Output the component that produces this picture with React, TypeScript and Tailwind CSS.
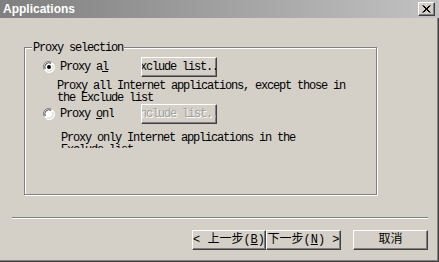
import React from "react";

const mono = { fontFamily: '"Liberation Mono", "DejaVu Sans Mono", monospace' };
const cjk = { fontFamily: '"Liberation Mono", "Noto Sans CJK SC", monospace' };

function Radio({ checked }: { checked?: boolean }) {
  return (
    <svg width="12" height="12" viewBox="0 0 12 12" className="shrink-0">
      <circle cx="6" cy="6" r="5.5" fill="#ffffff" />
      <path d="M1.2 8.5 A5.3 5.3 0 0 1 8.5 1.2" stroke="#808080" strokeWidth="1" fill="none" />
      <path d="M2.3 8 A4.2 4.2 0 0 1 8 2.3" stroke="#404040" strokeWidth="1" fill="none" />
      <path d="M10.8 3.5 A5.3 5.3 0 0 1 3.5 10.8" stroke="#ffffff" strokeWidth="1" fill="none" />
      <path d="M9.7 4 A4.2 4.2 0 0 1 4 9.7" stroke="#d4d0c8" strokeWidth="1" fill="none" />
      {checked && <circle cx="6" cy="6" r="2" fill="#000000" />}
    </svg>
  );
}

function Btn({
  children,
  w,
  disabled,
  className = "",
}: {
  children: React.ReactNode;
  w: string;
  disabled?: boolean;
  className?: string;
}) {
  return (
    <div
      className={`${w} h-[20px] shrink-0 bg-[#d4d0c8] border border-t-white border-l-white border-b-[#404040] border-r-[#404040] shadow-[inset_-1px_-1px_0_#808080] flex items-center justify-center overflow-hidden whitespace-nowrap text-[12px] leading-[12px] ${
        disabled ? "text-[#a0a0a0] [text-shadow:1px_1px_0_#ffffff]" : "text-black"
      } ${className}`}
    >
      {children}
    </div>
  );
}

export default function App() {
  return (
    <div className="w-[439px] h-[262px] bg-[#d4d0c8] flex flex-col overflow-hidden shadow-[inset_-1px_-1px_0_#404040,inset_-2px_-2px_0_#808080]">
      {/* Title bar */}
      <div className="h-[18px] shrink-0 flex items-center justify-between bg-[linear-gradient(90deg,#7f7f7f_0%,#9a9a9a_40%,#c2c2c2_100%)] pl-[3px] pr-[4px]">
        <span
          className="text-white font-bold text-[12px] leading-[14px]"
          style={{ fontFamily: '"Liberation Sans", Arial, sans-serif' }}
        >
          Applications
        </span>
        <div className="w-[17px] h-[14px] bg-[#d4d0c8] border border-t-white border-l-white border-b-[#404040] border-r-[#404040] shadow-[inset_-1px_-1px_0_#808080] flex items-center justify-center">
          <svg width="9" height="8" viewBox="0 0 9 8">
            <path d="M0.5 0.5 L7.5 7.5 M1.5 0.5 L8.5 7.5 M7.5 0.5 L0.5 7.5 M8.5 0.5 L1.5 7.5" stroke="#000" strokeWidth="1" />
          </svg>
        </div>
      </div>

      {/* Group box */}
      <div
        className="relative mt-[29px] ml-[24px] w-[353px] h-[148px] shrink-0 border border-[#808080] shadow-[inset_1px_1px_0_#ffffff,1px_1px_0_#ffffff] flex flex-col text-black text-[12px] leading-[12px] tracking-[-1.2px]"
        style={mono}
      >
        <div className="absolute left-[7px] top-[-6px] bg-[#d4d0c8] px-[1px] h-[13px] leading-[13px] whitespace-nowrap">
          Proxy selection
        </div>

        <div className="flex items-center mt-[9px] ml-[18px]">
          <Radio checked />
          <div className="ml-[5px] w-[49px] overflow-hidden whitespace-nowrap">
            Proxy a<u>l</u>l
          </div>
          <Btn w="w-[76px]" className="ml-[32px]">
            Exclude list...
          </Btn>
        </div>

        <div className="mt-[3px] ml-[32px] whitespace-nowrap">
          Proxy all Internet applications, except those in
          <br />
          the Exclude list
        </div>

        <div className="flex items-center ml-[18px]">
          <Radio />
          <div className="ml-[5px] w-[54px] overflow-hidden whitespace-nowrap">
            Proxy <u>o</u>nly
          </div>
          <Btn w="w-[76px]" className="ml-[27px]" disabled>
            Include list...
          </Btn>
        </div>

        <div className="mt-[8px] ml-[36px] h-[16px] overflow-hidden whitespace-nowrap">
          Proxy only Internet applications in the
          <br />
          Exclude list
        </div>
      </div>

      {/* Separator */}
      <div className="mt-[22px] ml-[12px] w-[416px] h-[2px] shrink-0 border-t border-t-[#808080] border-b border-b-white" />

      {/* Buttons */}
      <div className="mt-[11px] flex justify-end pr-[11px]" style={cjk}>
        <Btn w="w-[74px]">
          &lt; 上一步(<u>B</u>)
        </Btn>
        <Btn w="w-[75px]">
          下一步(<u>N</u>) &gt;
        </Btn>
        <Btn w="w-[75px]" className="ml-[12px]">
          取消
        </Btn>
      </div>
    </div>
  );
}
